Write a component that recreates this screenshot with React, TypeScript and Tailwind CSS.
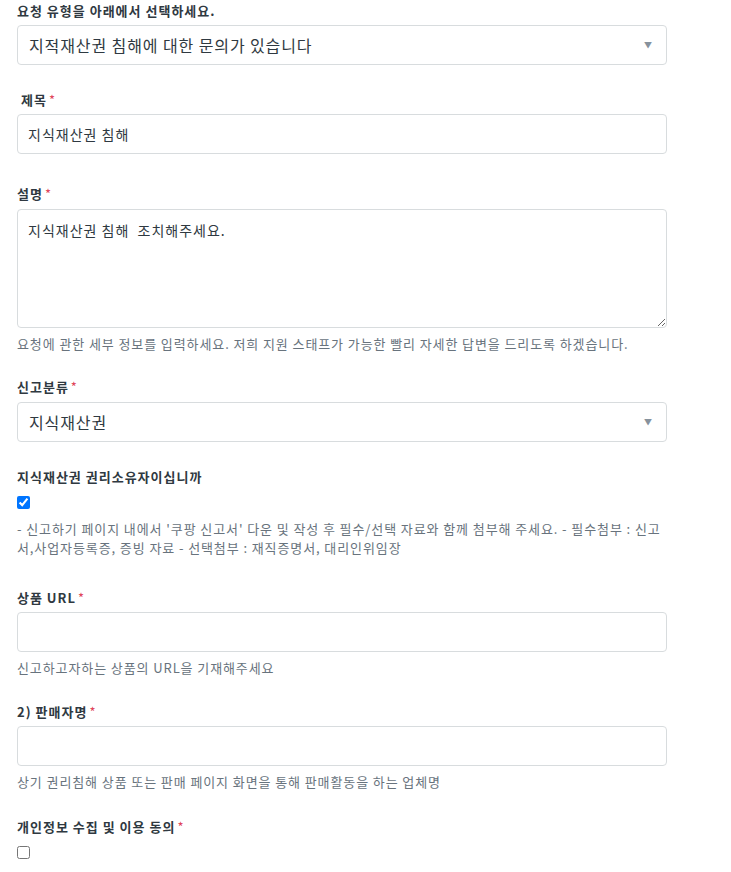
import React from "react";

const Req = () => <span className="text-[#e0455a] ml-[2px] font-normal tracking-normal">*</span>;

function Label({ children, req, className = "" }: { children: React.ReactNode; req?: boolean; className?: string }) {
  return (
    <div className={"h-[20px] leading-[20px] text-[13px] font-bold tracking-[1px] text-[#2f3941] " + className}>
      {children}
      {req && <Req />}
    </div>
  );
}

function SelectBox({ value }: { value: string }) {
  return (
    <div className="w-[650px] h-[40px] border border-[#d8dcde] rounded-[4px] flex items-center justify-between pl-[11px] pr-[14px] bg-white">
      <span className="text-[16px] tracking-[0.9px] text-[#2f3941]">{value}</span>
      <span className="text-[8px] text-[#87929d]">▼</span>
    </div>
  );
}

function TextInput({ value = "" }: { value?: string }) {
  return (
    <div className="w-[650px] h-[40px] border border-[#d8dcde] rounded-[4px] flex items-center px-[10px] bg-white">
      <span className="text-[14px] tracking-[1px] text-[#2f3941]">{value}</span>
    </div>
  );
}

function Help({ children, className = "" }: { children: React.ReactNode; className?: string }) {
  return <div className={"text-[13px] leading-[19px] tracking-[0.9px] text-[#68737d] " + className}>{children}</div>;
}

export default function App() {
  return (
    <div
      className="w-[731px] h-[872px] bg-white pl-[17px] pt-px"
      style={{ fontFamily: '"Noto Sans CJK KR", "Noto Sans", sans-serif' }}
    >
      <Label>요청 유형을 아래에서 선택하세요.</Label>
      <div className="mt-[4px]">
        <SelectBox value="지적재산권 침해에 대한 문의가 있습니다" />
      </div>

      <Label req className="mt-[25px] pl-[4px]">제목</Label>
      <div className="mt-[4px]">
        <TextInput value="지식재산권 침해" />
      </div>

      <Label req className="mt-[30px]">설명</Label>
      <div className="mt-[5px] w-[650px]">
        <textarea
          defaultValue="지식재산권 침해  조치해주세요."
          className="block w-[650px] h-[119px] border border-[#d8dcde] rounded-[4px] px-[10px] py-[10px] text-[14px] leading-[20px] tracking-[1px] text-[#2f3941] outline-none resize-y"
          style={{ fontFamily: '"Noto Sans CJK KR", "Noto Sans", sans-serif' }}
        />
      </div>
      <Help className="mt-[6px]">요청에 관한 세부 정보를 입력하세요. 저희 지원 스태프가 가능한 빨리 자세한 답변을 드리도록 하겠습니다.</Help>

      <Label req className="mt-[24px]">신고분류</Label>
      <div className="mt-[5px]">
        <SelectBox value="지식재산권" />
      </div>

      <Label className="mt-[25px]">지식재산권 권리소유자이십니까</Label>
      <div className="mt-[9px] h-[13px] flex">
        <input type="checkbox" defaultChecked className="m-0 w-[13px] h-[13px] accent-[#0075ff]" />
      </div>
      <Help className="mt-[10px] w-[650px]">
        - 신고하기 페이지 내에서 '쿠팡 신고서' 다운 및 작성 후 필수/선택 자료와 함께 첨부해 주세요. - 필수첨부 : 신고서,사업자등록증, 증빙 자료 - 선택첨부 : 재직증명서, 대리인위임장
      </Help>

      <Label req className="mt-[31px]">상품 URL</Label>
      <div className="mt-[4px]">
        <TextInput />
      </div>
      <Help className="mt-[6px]">신고하고자하는 상품의 URL을 기재해주세요</Help>

      <Label req className="mt-[25px]">2) 판매자명</Label>
      <div className="mt-[4px]">
        <TextInput />
      </div>
      <Help className="mt-[6px]">상기 권리침해 상품 또는 판매 페이지 화면을 통해 판매활동을 하는 업체명</Help>

      <Label req className="mt-[26px]">개인정보 수집 및 이용 동의</Label>
      <div className="mt-[9px] h-[13px] flex">
        <input type="checkbox" className="m-0 w-[13px] h-[13px]" />
      </div>
    </div>
  );
}
